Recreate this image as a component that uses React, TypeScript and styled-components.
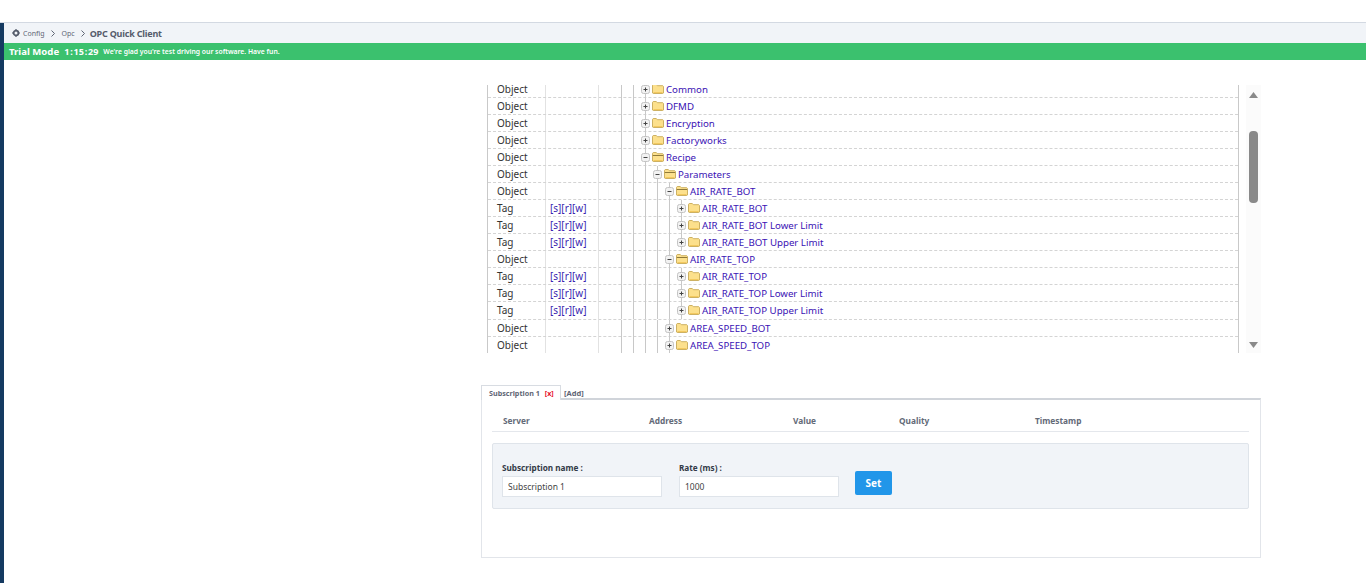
import styled, { createGlobalStyle } from "styled-components";

const GlobalStyle = createGlobalStyle`
    html, body {
        margin: 0;
        height: 100%;
        overflow: hidden;
        background: #fff;
    }
    * {
        box-sizing: border-box;
    }
`;

const Page = styled.div`
    height: 583px;
    font-family: "Noto Sans", sans-serif;
`;

const TopBar = styled.div`
    height: 23px;
    border-bottom: 1px solid #d3d9e2;
`;

const Body = styled.div`
    display: flex;
    height: 560px;
`;

const Sidebar = styled.div`
    width: 4px;
    background: #153a61;
`;

const Main = styled.div`
    flex: 1;
    min-width: 0;
`;

const Breadcrumb = styled.div`
    height: 20px;
    background: #f1f4f8;
    display: flex;
    align-items: center;
    padding-left: 8px;
    color: #5f6675;
    font-size: 7px;
`;

const Chevron = styled.span`
    margin: 0 7px 0 6px;
    display: flex;
`;

const TitleChevron = styled(Chevron)`
    margin: 0 5px 0 6px;
`;

const PageTitle = styled.span`
    font-size: 9px;
    font-weight: 700;
    letter-spacing: -0.2px;
    color: #555c6b;
`;

const TrialBar = styled.div`
    height: 17px;
    background: #3bc16e;
    color: #fff;
    display: flex;
    align-items: center;
    padding-left: 5px;
    white-space: nowrap;
`;

const TrialTitle = styled.span`
    font-size: 9.6px;
    font-weight: 700;
    margin-right: 5px;
`;

const TrialClock = styled.span`
    font-size: 9px;
    font-weight: 700;
    word-spacing: -1.5px;
    margin-right: 5px;
`;

const TrialText = styled.span`
    font-size: 6.8px;
    font-weight: 600;
`;

const Content = styled.div`
    width: 780px;
    margin-left: 477px;
`;

const TreeArea = styled.div`
    display: flex;
    height: 268px;
    margin-top: 25px;
    margin-left: 6px;
`;

const TreeClip = styled.div`
    width: 752px;
    height: 268px;
    overflow: hidden;
    border-left: 1px solid #c9c9c9;
    border-right: 1px solid #c9c9c9;
`;

const TreeRows = styled.div`
    margin-top: -3.9375px;
`;

const Row = styled.div`
    display: flex;
    height: 17.03125px;
    border-bottom: 1px dashed #d4d4d4;
    font-size: 9.7px;
    line-height: 17px;
    white-space: nowrap;
`;

const TypeCell = styled.div`
    width: 58px;
    padding-left: 9px;
    font-size: 10px;
    color: #333;
    border-right: 1px solid #e2e2e2;
`;

const AccessCell = styled.div`
    width: 53px;
    padding-left: 4px;
    font-size: 10px;
    color: #3a1fb0;
    border-right: 1px solid #e2e2e2;
`;

const EmptyCell = styled.div`
    width: 22px;
`;

const TreeCell = styled.div`
    display: flex;
    align-items: flex-start;
    flex: 1;
`;

const Guide = styled.div`
    width: 12px;
    height: 17px;
    border-left: 1px solid #c8c8c8;
`;

const Stem = styled.div`
    width: 1px;
    height: 17px;
    background: #c8c8c8;
`;

const Label = styled.span`
    margin-left: 2px;
    color: #3a12b4;
`;

const ExpanderIcon = styled.svg`
    margin: 4px 0 0 -5px;
    flex: none;
`;

const FolderIcon = styled.svg`
    margin: 3px 0 0 2px;
    flex: none;
`;

const GearIcon = styled.svg`
    margin-right: 3px;
`;

const ScrollTrack = styled.div`
    width: 15px;
    margin-left: 7px;
    background: #fbfbfb;
    display: flex;
    flex-direction: column;
    align-items: center;
    padding: 7px 0 5px;
`;

const ScrollThumb = styled.div`
    width: 9px;
    height: 72px;
    margin-top: 33px;
    border-radius: 4px;
    background: #8a8a8a;
`;

const ScrollDown = styled.svg`
    margin-top: auto;
`;

const Tabs = styled.div`
    display: flex;
    height: 15px;
    margin-top: 32px;
    font-size: 7.5px;
    font-weight: 700;
    color: #5f6675;
`;

const ActiveTab = styled.div`
    width: 80px;
    height: 15px;
    padding-left: 7px;
    line-height: 15px;
    font-size: 7.2px;
    background: #fff;
    border: 1px solid #d8dce2;
    border-bottom: none;
    position: relative;
    z-index: 1;
`;

const CloseMark = styled.span`
    color: #e8112d;
    margin-left: 5px;
`;

const AddTab = styled.div`
    padding-left: 3px;
    line-height: 16px;
`;

const TabPanel = styled.div`
    height: 160px;
    margin-top: -2px;
    border: 1px solid #e2e5ea;
    border-top: 2px solid #d0d4da;
    padding: 11px 11px 0 10px;
`;

const GridHead = styled.div`
    display: grid;
    grid-template-columns: 146px 144px 106px 136px 1fr;
    height: 21px;
    padding-left: 11px;
    border-bottom: 1px solid #e4e7ec;
    font-size: 8.3px;
    font-weight: 700;
    line-height: 19px;
    color: #636a78;
`;

const FormBox = styled.div`
    display: flex;
    height: 66px;
    margin-top: 11px;
    padding: 18px 0 0 9px;
    background: #f1f4f8;
    border: 1px solid #dfe4ea;
    border-radius: 2px;
`;

const Field = styled.div`
    width: 160px;
    margin-right: 17px;
`;

const FieldLabel = styled.label`
    display: block;
    height: 14px;
    font-size: 8.2px;
    font-weight: 700;
    line-height: 12px;
    color: #333a47;
`;

const TextInput = styled.input`
    display: block;
    width: 160px;
    height: 21px;
    padding: 0 5px;
    background: #fff;
    border: 1px solid #dfe4ea;
    font-family: inherit;
    font-size: 8.5px;
    color: #444;
    outline: none;
`;

const SetButton = styled.button`
    width: 37px;
    height: 24px;
    margin: 9px 0 0 -1px;
    background: #2196e9;
    border: none;
    border-radius: 2px;
    color: #fff;
    font-family: inherit;
    font-size: 10px;
    font-weight: 700;
    padding: 0;
`;

interface ITreeRow {
    kind: "Object" | "Tag";
    depth: number;
    open?: boolean;
    name: string;
}

const rows: ITreeRow[] = [
    { kind: "Object", depth: 2, name: "Common" },
    { kind: "Object", depth: 2, name: "DFMD" },
    { kind: "Object", depth: 2, name: "Encryption" },
    { kind: "Object", depth: 2, name: "Factoryworks" },
    { kind: "Object", depth: 2, open: true, name: "Recipe" },
    { kind: "Object", depth: 3, open: true, name: "Parameters" },
    { kind: "Object", depth: 4, open: true, name: "AIR_RATE_BOT" },
    { kind: "Tag", depth: 5, name: "AIR_RATE_BOT" },
    { kind: "Tag", depth: 5, name: "AIR_RATE_BOT Lower Limit" },
    { kind: "Tag", depth: 5, name: "AIR_RATE_BOT Upper Limit" },
    { kind: "Object", depth: 4, open: true, name: "AIR_RATE_TOP" },
    { kind: "Tag", depth: 5, name: "AIR_RATE_TOP" },
    { kind: "Tag", depth: 5, name: "AIR_RATE_TOP Lower Limit" },
    { kind: "Tag", depth: 5, name: "AIR_RATE_TOP Upper Limit" },
    { kind: "Object", depth: 4, name: "AREA_SPEED_BOT" },
    { kind: "Object", depth: 4, name: "AREA_SPEED_TOP" },
];

const columns = ["Server", "Address", "Value", "Quality", "Timestamp"];

function Expander({ open }: { open?: boolean }) {
    return (
        <ExpanderIcon width="9" height="9" viewBox="0 0 9 9">
            <rect x="0.5" y="0.5" width="8" height="8" rx="2" fill="#f2f2f2" stroke="#c4c4c4" />
            <path d="M2.5 4.5h4" stroke="#444" />
            {!open && <path d="M4.5 2.5v4" stroke="#444" />}
        </ExpanderIcon>
    );
}

function Folder({ open }: { open?: boolean }) {
    return (
        <FolderIcon width="12" height="10" viewBox="0 0 12 10">
            <path d="M0.5 2V1.2L1.2 0.5H4.3L5.3 1.7H10.8L11.5 2.4V9L10.8 9.5H1.2L0.5 9Z" fill="#fce08c" stroke="#cdb162" />
            {open && <path d="M0.8 3.5H11.2" stroke="#8f7a3a" />}
            <path d="M1.5 8.5H10.5" stroke="#f3c95f" />
        </FolderIcon>
    );
}

function Arrow() {
    return (
        <svg width="4" height="7" viewBox="0 0 4 7">
            <path d="M0.5 0.5l3 3-3 3" fill="none" stroke="#5f6675" />
        </svg>
    );
}

function App() {
    return (
        <Page>
            <GlobalStyle />
            <TopBar />
            <Body>
                <Sidebar />
                <Main>
                    <Breadcrumb>
                        <GearIcon width="8" height="8" viewBox="0 0 8 8">
                            <circle cx="4" cy="4" r="2.4" fill="none" stroke="#555c6b" strokeWidth="1.8" />
                            <path d="M4 0v1.2M4 6.8V8M0 4h1.2M6.8 4H8" stroke="#555c6b" strokeWidth="1.2" />
                        </GearIcon>
                        Config
                        <Chevron>
                            <Arrow />
                        </Chevron>
                        Opc
                        <TitleChevron>
                            <Arrow />
                        </TitleChevron>
                        <PageTitle>OPC Quick Client</PageTitle>
                    </Breadcrumb>
                    <TrialBar>
                        <TrialTitle>Trial Mode</TrialTitle>
                        <TrialClock>1 : 15 : 29</TrialClock>
                        <TrialText>We're glad you're test driving our software. Have fun.</TrialText>
                    </TrialBar>
                    <Content>
                        <TreeArea>
                            <TreeClip>
                                <TreeRows>
                                    {rows.map((row, i) => (
                                        <Row key={i}>
                                            <TypeCell>{row.kind}</TypeCell>
                                            <AccessCell>{row.kind === "Tag" ? "[s][r][w]" : ""}</AccessCell>
                                            <EmptyCell />
                                            <TreeCell>
                                                {Array.from({ length: row.depth }).map((_, g) => (
                                                    <Guide key={g} />
                                                ))}
                                                <Stem />
                                                <Expander open={row.open} />
                                                <Folder open={row.open} />
                                                <Label>{row.name}</Label>
                                            </TreeCell>
                                        </Row>
                                    ))}
                                </TreeRows>
                            </TreeClip>
                            <ScrollTrack>
                                <svg width="9" height="6" viewBox="0 0 9 6">
                                    <path d="M4.5 0L9 6H0Z" fill="#8a8a8a" />
                                </svg>
                                <ScrollThumb />
                                <ScrollDown width="9" height="6" viewBox="0 0 9 6">
                                    <path d="M0 0H9L4.5 6Z" fill="#8a8a8a" />
                                </ScrollDown>
                            </ScrollTrack>
                        </TreeArea>
                        <Tabs>
                            <ActiveTab>
                                Subscription 1<CloseMark>[x]</CloseMark>
                            </ActiveTab>
                            <AddTab>[Add]</AddTab>
                        </Tabs>
                        <TabPanel>
                            <GridHead>
                                {columns.map((c) => (
                                    <span key={c}>{c}</span>
                                ))}
                            </GridHead>
                            <FormBox>
                                <Field>
                                    <FieldLabel>Subscription name :</FieldLabel>
                                    <TextInput defaultValue="Subscription 1" />
                                </Field>
                                <Field>
                                    <FieldLabel>Rate (ms) :</FieldLabel>
                                    <TextInput defaultValue="1000" />
                                </Field>
                                <SetButton>Set</SetButton>
                            </FormBox>
                        </TabPanel>
                    </Content>
                </Main>
            </Body>
        </Page>
    );
}

export default App;
